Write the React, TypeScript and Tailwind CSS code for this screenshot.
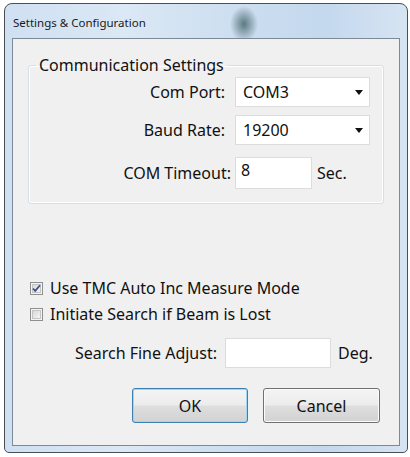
import React from "react";

const font = "font-['Noto_Sans','Open_Sans',sans-serif]";

const Caret = () => (
  <svg width="8" height="5" viewBox="0 0 8 5" className="shrink-0">
    <path d="M0 0h8L4 5z" fill="#111" />
  </svg>
);

const Combo = ({ value }: { value: string }) => (
  <div className="flex h-[30px] w-[135px] items-center justify-between border border-[#dcdcdc] bg-white pl-[7px] pr-[6px] text-[#111]">
    <span>{value}</span>
    <Caret />
  </div>
);

const CheckBox = ({ checked }: { checked?: boolean }) => (
  <svg width="13" height="13" viewBox="0 0 13 13" className="shrink-0">
    <defs>
      <linearGradient id={checked ? "cbOn" : "cbOff"} x1="0" y1="0" x2="1" y2="1">
        <stop offset="0" stopColor="#d8d8d8" />
        <stop offset="1" stopColor="#f6f6f6" />
      </linearGradient>
    </defs>
    <rect x="0.5" y="0.5" width="12" height="12" fill="#f4f4f4" stroke="#8e8f8f" />
    <rect x="2.5" y="2.5" width="8" height="8" fill={`url(#${checked ? "cbOn" : "cbOff"})`} stroke="#c4c4c4" />
    {checked && (
      <path d="M3 6.5l2.2 2.4L10 3.2" fill="none" stroke="#3b4f8f" strokeWidth="1.7" />
    )}
  </svg>
);

const Button = ({ label, focused }: { label: string; focused?: boolean }) => (
  <div
    className={`flex h-[35px] items-center justify-center rounded-[3px] border text-[#111] bg-[linear-gradient(#f4f4f4,#ececec_48%,#dedede_52%,#d2d2d2)] ${
      focused
        ? "w-[116px] border-[#3c7fb1] shadow-[inset_0_0_0_1px_#9fd6f2]"
        : "w-[117px] border-[#707070] shadow-[inset_0_0_0_1px_#fbfbfb]"
    }`}
  >
    {label}
  </div>
);

export default function App() {
  return (
    <div className={`h-[457px] w-[410px] bg-white pl-[4px] pt-[3px] ${font}`}>
      <div className="flex h-[450px] w-[404px] flex-col rounded-t-[8px] rounded-b-[5px] border border-[#4a4f55] bg-[linear-gradient(90deg,#cfe0f2,#dbe8f5_30%,#cddff0_55%,#c4d8ee_80%,#d6e4f2)] px-[7px] pb-[6px]">
        <div className="flex h-[34px] items-center pl-[1px] pt-[3px] text-[11.5px] text-[#1a1a1a] bg-[radial-gradient(ellipse_14px_18px_at_232px_20px,#5b7880,transparent)]">
          Settings &amp; Configuration
        </div>
        <div className="flex flex-1 flex-col border border-[#7d8a96] bg-[#f0f0f0] text-[16px] leading-[24px] text-[#111]">
          <fieldset className="ml-[15px] mt-[15px] h-[150px] w-[356px] rounded-[3px] border border-[#d5dfe5] shadow-[inset_0_0_0_1px_#fff]">
            <legend className="ml-[7px] px-[3px] leading-[22px]">Communication Settings</legend>
            <div className="flex flex-col pt-[1px]">
              <div className="flex items-center">
                <span className="w-[206px] pr-[10px] text-right">Com Port:</span>
                <Combo value="COM3" />
              </div>
              <div className="mt-[8px] flex items-center">
                <span className="w-[206px] pr-[10px] text-right">Baud Rate:</span>
                <Combo value="19200" />
              </div>
              <div className="mt-[12px] flex items-center">
                <span className="w-[206px] pr-[4px] text-right">COM Timeout:</span>
                <div className="flex h-[32px] w-[77px] items-start border border-[#dcdcdc] bg-white pl-[5px]">8</div>
                <span className="ml-[5px]">Sec.</span>
              </div>
            </div>
          </fieldset>
          <div className="ml-[17px] mt-[72px] flex items-center gap-[7px]">
            <CheckBox checked />
            <span>Use TMC Auto Inc Measure Mode</span>
          </div>
          <div className="ml-[17px] mt-[2px] flex items-center gap-[7px]">
            <CheckBox />
            <span>Initiate Search if Beam is Lost</span>
          </div>
          <div className="mt-[12px] flex items-center pl-[54px]">
            <span className="w-[158px] pr-[8px] text-right">Search Fine Adjust:</span>
            <div className="h-[30px] w-[106px] border border-[#dcdcdc] bg-white" />
            <span className="ml-[7px]">Deg.</span>
          </div>
          <div className="mt-[20px] flex justify-end gap-[15px] pr-[19px]">
            <Button label="OK" focused />
            <Button label="Cancel" />
          </div>
        </div>
      </div>
    </div>
  );
}
